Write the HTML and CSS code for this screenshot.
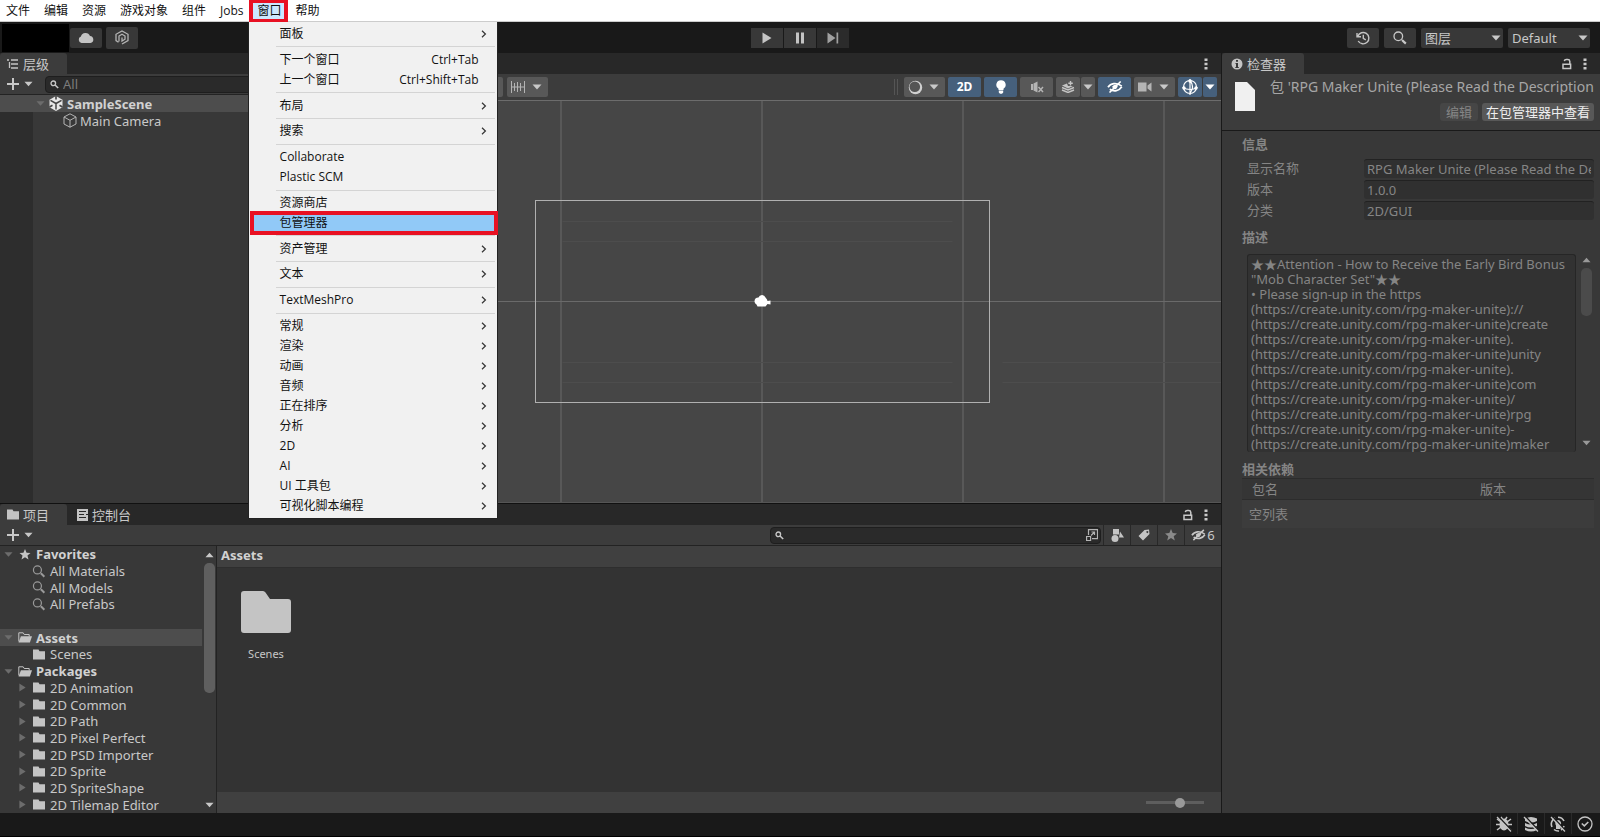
FILE: index.html
```html
<!DOCTYPE html>
<html lang="zh-CN">
<head>
  <meta charset="UTF-8">
  <title>SampleScene - Unity</title>
  <link rel="stylesheet" href="styles.css">
</head>
<body>
  <!-- Icônes partagées -->
  <svg class="sprite" width="0" height="0">
    <symbol id="down" viewBox="0 0 10 6"><path fill="currentColor" d="M0.5 0.5h9L5 5.5z"/></symbol>
    <symbol id="up" viewBox="0 0 10 6"><path fill="currentColor" d="M0.5 5.5h9L5 0.5z"/></symbol>
    <symbol id="right" viewBox="0 0 8 10"><path fill="currentColor" d="M0.5 0.5v9L7.5 5z"/></symbol>
    <symbol id="chevron" viewBox="0 0 6 8"><path fill="none" stroke="#333" stroke-width="1.2" d="M1 0.8L4.4 4 1 7.2"/></symbol>
    <symbol id="plus" viewBox="0 0 14 14"><path stroke="currentColor" stroke-width="2" d="M7 1v12M1 7h12"/></symbol>
    <symbol id="kebab" viewBox="0 0 4 12"><path fill="currentColor" d="M0.5 0.5h3v2.6h-3zM0.5 4.7h3v2.6h-3zM0.5 8.9h3v2.6h-3z"/></symbol>
    <symbol id="lock" viewBox="0 0 12 12"><path fill="none" stroke="currentColor" stroke-width="1.5" d="M2 6.3h7.6v4.2H2zM8.800 6V3.400a2 2 0 0 0-2-1.800H5.300a2 2 0 0 0-2 1.600"/></symbol>
    <symbol id="folder" viewBox="0 0 50 42"><path fill="#c4c4c4" d="M3 0h19q1.500 0 2.500 1.500L29 8h18q3 0 3 3v28q0 3-3 3H3q-3 0-3-3V3q0-3 3-3z"/></symbol>
    <symbol id="smallfolder" viewBox="0 0 12 11"><path fill="#c4c4c4" d="M0 .5h5.500l1 1.800H12V10.500H0z"/></symbol>
    <symbol id="openfolder" viewBox="0 0 14 11"><path fill="none" stroke="#c4c4c4" d="M.8 9.500V.8h4.400l1 1.700h5v2"/><path fill="#c4c4c4" d="M2.900 4.300H14L11.900 10.500H.6z"/></symbol>
    <symbol id="lens" viewBox="0 0 14 14"><circle cx="5.300" cy="5.300" r="4.300" fill="none" stroke="currentColor" stroke-width="1.300"/><path stroke="currentColor" stroke-width="2.200" d="M9 9l3.800 3.600"/></symbol>
    <symbol id="smalllens" viewBox="0 0 9 9"><circle cx="3.300" cy="3.300" r="2.300" fill="none" stroke="currentColor" stroke-width="1.300"/><path stroke="currentColor" stroke-width="1.600" d="M5 5l3.200 3"/></symbol>
    <symbol id="star" viewBox="0 0 12 12"><path fill="currentColor" d="M6 0l1.700 4.100 4.300.3-3.300 2.800 1.100 4.300L6 9.100l-3.800 2.400 1.100-4.300L0 4.400l4.300-.3z"/></symbol>
    <symbol id="eyeoff" viewBox="0 0 16 12"><path fill="none" stroke="currentColor" stroke-width="1.700" d="M1 6.300C3.500 2.300 9.500 1 14.800 5.200M14.800 5.700C12 10 7 11 2.800 8.200"/><path fill="currentColor" d="M5.200 5.500Q8 2 10.800 5.500 9 9.400 6 8z"/><path stroke="currentColor" stroke-width="1.600" d="M2.500 11.500L13.700.5"/></symbol>
  </svg>

  <div class="app">
    <nav class="menubar">
      <button>文件</button>
      <button>编辑</button>
      <button>资源</button>
      <button>游戏对象</button>
      <button>组件</button>
      <button>Jobs</button>
      <div class="menu-holder">
        <button class="open marked">窗口</button>
        <div class="menu">
          <button class="menu-item"><span>面板</span><svg><use href="#chevron"/></svg></button>
          <hr>
          <button class="menu-item"><span>下一个窗口</span><kbd>Ctrl+Tab</kbd></button>
          <button class="menu-item"><span>上一个窗口</span><kbd>Ctrl+Shift+Tab</kbd></button>
          <hr>
          <button class="menu-item"><span>布局</span><svg><use href="#chevron"/></svg></button>
          <hr>
          <button class="menu-item"><span>搜索</span><svg><use href="#chevron"/></svg></button>
          <hr>
          <button class="menu-item"><span>Collaborate</span></button>
          <button class="menu-item"><span>Plastic SCM</span></button>
          <hr>
          <button class="menu-item"><span>资源商店</span></button>
          <button class="menu-item selected marked"><span>包管理器</span></button>
          <hr>
          <button class="menu-item"><span>资产管理</span><svg><use href="#chevron"/></svg></button>
          <hr>
          <button class="menu-item"><span>文本</span><svg><use href="#chevron"/></svg></button>
          <hr>
          <button class="menu-item"><span>TextMeshPro</span><svg><use href="#chevron"/></svg></button>
          <hr>
          <button class="menu-item"><span>常规</span><svg><use href="#chevron"/></svg></button>
          <button class="menu-item"><span>渲染</span><svg><use href="#chevron"/></svg></button>
          <button class="menu-item"><span>动画</span><svg><use href="#chevron"/></svg></button>
          <button class="menu-item"><span>音频</span><svg><use href="#chevron"/></svg></button>
          <button class="menu-item"><span>正在排序</span><svg><use href="#chevron"/></svg></button>
          <button class="menu-item"><span>分析</span><svg><use href="#chevron"/></svg></button>
          <button class="menu-item"><span>2D</span><svg><use href="#chevron"/></svg></button>
          <button class="menu-item"><span>AI</span><svg><use href="#chevron"/></svg></button>
          <button class="menu-item"><span>UI 工具包</span><svg><use href="#chevron"/></svg></button>
          <button class="menu-item"><span>可视化脚本编程</span><svg><use href="#chevron"/></svg></button>
        </div>
      </div>
      <button>帮助</button>
    </nav>

    <header class="topbar">
      <div class="account">
        <div class="account-name"></div>
        <button class="tool" aria-label="Cloud"><svg width="16" height="11" viewBox="0 0 16 11"><path fill="#c4c4c4" d="M3.500 11a3.400 3.400 0 0 1-.6-6.500A4.800 4.800 0 0 1 12 3.900 3.600 3.600 0 0 1 12.500 11z"/></svg></button>
        <button class="tool plastic" aria-label="Plastic SCM"><svg width="14" height="15" viewBox="0 0 14 15"><path fill="none" stroke="#b4b4b4" stroke-width="1.300" d="M3.500 12.300L1 10.600V4.300L7 1l6 3.300v6.300l-6 3.400M4 11.500V6L7 4.200 10 6v3.200L7 11V7.500"/></svg></button>
      </div>
      <div class="playbar">
        <button class="tool" aria-label="Play"><svg width="10" height="12" viewBox="0 0 10 12"><path fill="#c4c4c4" d="M.5.5v11L9.500 6z"/></svg></button>
        <button class="tool" aria-label="Pause"><svg width="10" height="12" viewBox="0 0 10 12"><path fill="#c4c4c4" d="M1 .5h3v11H1zM6 .5h3v11H6z"/></svg></button>
        <button class="tool dim" aria-label="Step"><svg width="12" height="12" viewBox="0 0 12 12"><path fill="#a0a0a0" d="M.5.5v11L8.500 6zM9.500.5h1.700v11H9.500z"/></svg></button>
      </div>
      <div class="top-right">
        <button class="tool" aria-label="History"><svg width="14" height="14" viewBox="0 0 14 14"><path fill="none" stroke="#c4c4c4" stroke-width="1.400" d="M1.800 5.200A5.700 5.700 0 1 1 2.200 10M1 2v3.700h4M7.300 3.800v3.600l2.500 1.400"/></svg></button>
        <button class="tool" aria-label="Search"><svg width="14" height="14"><use href="#lens"/></svg></button>
        <label class="drop"><select aria-label="Layers"><option>图层</option></select><svg width="10" height="6"><use href="#down"/></svg></label>
        <label class="drop"><select aria-label="Layout"><option>Default</option></select><svg width="10" height="6"><use href="#down"/></svg></label>
      </div>
    </header>

    <div class="workspace">
      <div class="left-area">
        <div class="upper">
          <section class="panel hierarchy">
            <div class="tabs">
              <div class="tab active"><svg width="12" height="10" viewBox="0 0 12 10"><path stroke="#c4c4c4" stroke-width="1.300" d="M0 1h2M4 1h7M4 5h7M4 9h7M2.500 3v6"/></svg>层级</div>
            </div>
            <div class="panel-tools">
              <button class="add" aria-label="Add"><svg width="14" height="14"><use href="#plus"/></svg><svg width="9" height="6"><use href="#down"/></svg></button>
              <label class="search"><svg width="9" height="9"><use href="#smalllens"/></svg><input type="text" placeholder="All" aria-label="Search hierarchy"></label>
            </div>
            <div class="objects">
              <div class="object scene-row">
                <svg width="9" height="7" class="fold"><use href="#down"/></svg>
                <svg width="14" height="15" viewBox="0 0 14 15"><path fill="#e6e6e6" d="M7 0l6.500 3.700v7.500L7 15 .5 11.200V3.700z"/><path stroke="#444" stroke-width="1.500" d="M7 7.500v6M7 7.500L1.500 4.300M7 7.500l5.500-3.200"/><path stroke="#444" stroke-width="1.600" d="M7 0v3.500M.5 11l3-1.700M13.500 11l-3-1.700"/></svg>
                <b>SampleScene</b>
              </div>
              <div class="object child">
                <svg width="14" height="15" viewBox="0 0 14 15"><path fill="none" stroke="#b4b4b4" d="M7 .8l6 3.200v7L7 14.200 1 11V4zM1 4l6 3.300L13 4M7 7.300v7"/></svg>
                <span>Main Camera</span>
              </div>
            </div>
          </section>

          <section class="panel scene">
            <div class="tabs">
              <div class="tab-actions"><svg width="4" height="12"><use href="#kebab"/></svg></div>
            </div>
            <div class="scene-tools">
              <div class="group">
                <button class="wide" aria-label="Pivot"></button>
                <button class="wide" aria-label="Rotation"></button>
                <button class="wide" aria-label="Grid"></button>
                <button class="pair" aria-label="Snap"><svg width="14" height="12" viewBox="0 0 14 12"><path stroke="#b4b4b4" d="M.5 0v12M3.500 2v8M6.500 1v10M9.500 2v8M13.500 0v12M0 6h14"/></svg><svg width="10" height="6"><use href="#down"/></svg></button>
              </div>
              <div class="group">
                <i class="grip"></i>
                <button class="pair" aria-label="Shading"><svg width="15" height="15" viewBox="0 0 15 15"><circle cx="7.500" cy="7.500" r="6.700" fill="#d0d0d0"/><circle cx="6.800" cy="6.800" r="5.300" fill="#555"/></svg><svg width="10" height="6"><use href="#down"/></svg></button>
                <button class="on two-d">2D</button>
                <button class="on" aria-label="Lighting"><svg width="10" height="14" viewBox="0 0 10 14"><path fill="#fff" d="M5 .3a4.600 4.600 0 0 1 2.500 8.500V10h-5V8.800A4.600 4.600 0 0 1 5 .3zM2.800 10.600h4.400v1.800L6 13.700H4l-1.200-1.300z"/></svg></button>
                <button aria-label="Audio"><svg width="14" height="12" viewBox="0 0 14 12"><path fill="#b4b4b4" d="M1 3h2v6H1zM3.500 2.500L7.500.5v11l-4-2z"/><path stroke="#b4b4b4" stroke-width="1.500" d="M8.500 6l4.500 5M13 6l-4.500 5"/></svg></button>
                <span class="split">
                  <button aria-label="Effects"><svg width="14" height="12" viewBox="0 0 14 12"><path fill="#c4c4c4" d="M1 4.500l5-2 1 2.500 5 0-5 2.500z"/><path fill="none" stroke="#c4c4c4" stroke-width="1.400" d="M1 6.500l6 2.500 6-2.500M1 9l6 2.500L13 9M9.500 0v4.500M7.300 2.200h4.500"/></svg></button>
                  <button class="arrow" aria-label="Effects options"><svg width="10" height="6"><use href="#down"/></svg></button>
                </span>
                <button class="on" aria-label="Visibility"><svg width="16" height="12"><use href="#eyeoff"/></svg></button>
                <button class="pair" aria-label="Camera"><svg width="14" height="10" viewBox="0 0 14 10"><path fill="#b4b4b4" d="M0 .5h8.500v9H0zM9.500 3.500L13.500.5v9l-4-3z"/></svg><svg width="10" height="6"><use href="#down"/></svg></button>
                <span class="split">
                  <button class="on" aria-label="Gizmos"><svg width="16" height="16" viewBox="0 0 16 16"><g fill="none" stroke="#fff" stroke-width="1.200"><circle cx="8" cy="8" r="6.500"/><path d="M8 0v16M.5 8.500q7.500 4 15 0M8 1.500q5 6 0 13"/></g><circle cx="8" cy="2" r="1.700" fill="#fff"/><circle cx="2" cy="9" r="1.700" fill="#fff"/><circle cx="14" cy="9" r="1.700" fill="#fff"/></svg></button>
                  <button class="arrow on" aria-label="Gizmo options"><svg width="10" height="6"><use href="#down"/></svg></button>
                </span>
              </div>
            </div>
            <svg class="scene-view">
              <svg x="50%" y="50%" overflow="visible">
                <path stroke="#6a6a6a" fill="none" d="M-201.500-400v800M-.5-400v800M200.500-400v800M401.500-400v800M-900 0h1800"/>
                <path stroke="#4d4d4d" fill="none" d="M-200-80h390M-200-60h390M-200 61h390M-200 81h390M240 61h220M240 81h220"/>
                <rect x="-227" y="-101" width="454" height="202" fill="none" stroke="#b0b0b0"/>
                <path fill="#fff" d="M-4-4a3.700 3.700 0 0 1 7 0q2 2 2 3.500l3-.5v4l-3-.5L3 5h-8L-6 3a3.500 3.500 0 0 1-2-3q0-4 4-4z"/>
              </svg>
            </svg>
          </section>
        </div>

        <section class="panel project">
          <div class="tabs">
            <div class="tab active"><svg width="12" height="11"><use href="#smallfolder"/></svg>项目</div>
            <div class="tab"><svg width="11" height="12" viewBox="0 0 11 12"><path fill="#c4c4c4" d="M0 0h11v12H0z"/><path stroke="#282828" d="M2 2.500h7M2 5.500h5M2 8.500h7M9 5.500h2"/></svg>控制台</div>
            <div class="tab-actions"><svg width="12" height="12"><use href="#lock"/></svg><svg width="4" height="12"><use href="#kebab"/></svg></div>
          </div>
          <div class="panel-tools">
            <button class="add" aria-label="Create"><svg width="14" height="14"><use href="#plus"/></svg><svg width="9" height="6"><use href="#down"/></svg></button>
            <div class="project-search">
              <label class="search"><svg width="9" height="9"><use href="#smalllens"/></svg><input type="text" aria-label="Search assets"><svg class="picker" width="12" height="12" viewBox="0 0 12 12"><path fill="none" stroke="#b4b4b4" stroke-width="1.200" d="M2.500 6V.6h9v9H6M.6 7.500h4v4h-4zM5 6.500L8.500 3M5.500 3h3v3"/></svg></label>
              <button class="filter" aria-label="Type"><svg width="13" height="13" viewBox="0 0 13 13"><path fill="#c4c4c4" d="M2 0h6v5.500H2zM9 2.500l4 6H8z"/><circle cx="4" cy="9.500" r="3.500" fill="#c4c4c4"/></svg></button>
              <button class="filter" aria-label="Label"><svg width="12" height="12" viewBox="0 0 12 12"><path fill="#c4c4c4" fill-rule="evenodd" d="M6.500 1L11 .5 11.500 5 5 11.500.5 7zM9.300 2a1 1 0 1 0 .1 0z"/></svg></button>
              <button class="filter dimmed" aria-label="Favorite"><svg width="12" height="12"><use href="#star"/></svg></button>
              <button class="filter hidden-count"><svg width="15" height="12"><use href="#eyeoff"/></svg>6</button>
            </div>
          </div>
          <div class="browser">
            <div class="tree">
              <div class="node"><svg class="fold"><use href="#down"/></svg><svg class="icon"><use href="#star"/></svg><b>Favorites</b></div>
              <div class="node leaf"><svg class="icon thin"><use href="#lens"/></svg>All Materials</div>
              <div class="node leaf"><svg class="icon thin"><use href="#lens"/></svg>All Models</div>
              <div class="node leaf"><svg class="icon thin"><use href="#lens"/></svg>All Prefabs</div>
              <div class="node"></div>
              <div class="node current"><svg class="fold"><use href="#down"/></svg><svg class="icon"><use href="#openfolder"/></svg><b>Assets</b></div>
              <div class="node leaf"><svg class="icon"><use href="#smallfolder"/></svg>Scenes</div>
              <div class="node"><svg class="fold"><use href="#down"/></svg><svg class="icon"><use href="#openfolder"/></svg><b>Packages</b></div>
              <div class="node sub"><svg class="fold"><use href="#right"/></svg><svg class="icon"><use href="#smallfolder"/></svg>2D Animation</div>
              <div class="node sub"><svg class="fold"><use href="#right"/></svg><svg class="icon"><use href="#smallfolder"/></svg>2D Common</div>
              <div class="node sub"><svg class="fold"><use href="#right"/></svg><svg class="icon"><use href="#smallfolder"/></svg>2D Path</div>
              <div class="node sub"><svg class="fold"><use href="#right"/></svg><svg class="icon"><use href="#smallfolder"/></svg>2D Pixel Perfect</div>
              <div class="node sub"><svg class="fold"><use href="#right"/></svg><svg class="icon"><use href="#smallfolder"/></svg>2D PSD Importer</div>
              <div class="node sub"><svg class="fold"><use href="#right"/></svg><svg class="icon"><use href="#smallfolder"/></svg>2D Sprite</div>
              <div class="node sub"><svg class="fold"><use href="#right"/></svg><svg class="icon"><use href="#smallfolder"/></svg>2D SpriteShape</div>
              <div class="node sub"><svg class="fold"><use href="#right"/></svg><svg class="icon"><use href="#smallfolder"/></svg>2D Tilemap Editor</div>
            </div>
            <div class="scrollbar"><svg width="9" height="6"><use href="#up"/></svg><div class="track"><div class="thumb"></div></div><svg width="9" height="6"><use href="#down"/></svg></div>
            <div class="assets">
              <div class="crumb"><b>Assets</b></div>
              <div class="files">
                <figure class="file"><svg width="50" height="42"><use href="#folder"/></svg><figcaption>Scenes</figcaption></figure>
              </div>
              <div class="zoombar"><input type="range" min="0" max="100" value="60" aria-label="Icon size"></div>
            </div>
          </div>
        </section>
      </div>

      <aside class="panel inspector">
        <div class="tabs">
          <div class="tab active"><svg width="12" height="12" viewBox="0 0 12 12"><circle cx="6" cy="6" r="5.500" fill="#c4c4c4"/><path fill="#383838" d="M5 2h2v1.800H5zM4.500 5H7v4h.8v1H4.300V9H5V6h-.5z"/></svg>检查器</div>
          <div class="tab-actions"><svg width="12" height="12"><use href="#lock"/></svg><svg width="4" height="12"><use href="#kebab"/></svg></div>
        </div>
        <div class="inspector-head">
          <svg class="doc" width="20" height="29" viewBox="0 0 20 29"><path fill="#f0f0f0" d="M0 0h12l8 8v21H0z"/></svg>
          <div class="head-body">
            <div class="head-title">包 'RPG Maker Unite (Please Read the Description</div>
            <div class="head-buttons">
              <button disabled>编辑</button>
              <button>在包管理器中查看</button>
            </div>
          </div>
        </div>
        <div class="inspector-body">
          <h2>信息</h2>
          <div class="fields">
            <label for="name">显示名称</label><input id="name" type="text" value="RPG Maker Unite (Please Read the Description)" readonly>
            <label for="version">版本</label><input id="version" type="text" value="1.0.0" readonly>
            <label for="category">分类</label><input id="category" type="text" value="2D/GUI" readonly>
          </div>
          <h2 id="desc-title">描述</h2>
          <div class="description">
            <textarea readonly aria-labelledby="desc-title">★★Attention - How to Receive the Early Bird Bonus
"Mob Character Set"★★
• Please sign-up in the https
(https://create.unity.com/rpg-maker-unite)://
(https://create.unity.com/rpg-maker-unite)create
(https://create.unity.com/rpg-maker-unite).
(https://create.unity.com/rpg-maker-unite)unity
(https://create.unity.com/rpg-maker-unite).
(https://create.unity.com/rpg-maker-unite)com
(https://create.unity.com/rpg-maker-unite)/
(https://create.unity.com/rpg-maker-unite)rpg
(https://create.unity.com/rpg-maker-unite)-
(https://create.unity.com/rpg-maker-unite)maker</textarea>
            <div class="scrollbar"><svg width="9" height="6"><use href="#up"/></svg><div class="track"><div class="thumb"></div></div><svg width="9" height="6"><use href="#down"/></svg></div>
          </div>
          <h2>相关依赖</h2>
          <table class="deps">
            <thead><tr><th>包名</th><th>版本</th></tr></thead>
            <tbody><tr><td colspan="2">空列表</td></tr></tbody>
          </table>
        </div>
      </aside>
    </div>

    <footer class="statusbar">
      <button aria-label="Debugger"><svg width="16" height="16" viewBox="0 0 16 16"><ellipse cx="8" cy="8.500" rx="4.500" ry="6" fill="#c4c4c4"/><path stroke="#c4c4c4" stroke-width="1.500" d="M1 3l4 3M15 3l-4 3M0 8.500h16M1 14l4-3M15 14l-4-3M5 1l2 3M11 1L9 4"/><path stroke="#191919" stroke-width="1.500" d="M2 0l14 15"/><path stroke="#c4c4c4" stroke-width="1.300" d="M1 1l14 14.500"/></svg></button>
      <button aria-label="Cache"><svg width="16" height="16" viewBox="0 0 16 16"><path fill="#c4c4c4" d="M2 2.500q6-3 12 0V5q-6 3-12 0zM2 7q6 3 12 0v3q-6 3-12 0zM2 11.500q6 3 12 0V14q-6 3-12 0z"/><path stroke="#191919" stroke-width="1.500" d="M2 0l14 15"/><path stroke="#c4c4c4" stroke-width="1.300" d="M1 1l14 14.500"/></svg></button>
      <button aria-label="Lighting"><svg width="16" height="16" viewBox="0 0 16 16"><path fill="none" stroke="#c4c4c4" stroke-width="1.600" d="M2 11A6.800 6.800 0 0 1 5 2M8 1.200A6.800 6.800 0 0 1 14 5M14 10a6.800 6.800 0 0 1-3 4M9 15a6.800 6.800 0 0 1-5-1.500"/><path fill="#c4c4c4" d="M8 4a3.500 3.500 0 0 1 2.500 5.500V13H6V9.500A3.500 3.500 0 0 1 8 4z"/><path stroke="#191919" stroke-width="1.500" d="M2 0l14 15"/><path stroke="#c4c4c4" stroke-width="1.300" d="M1 1l14 14.500"/></svg></button>
      <button aria-label="Progress"><svg width="16" height="16" viewBox="0 0 16 16"><circle cx="8" cy="8" r="7" fill="none" stroke="#c4c4c4" stroke-width="1.300"/><path fill="none" stroke="#c4c4c4" stroke-width="1.600" d="M4.800 7.500l2.500 2.300 4-3.800"/></svg></button>
    </footer>
  </div>
</body>
</html>
```
FILE: styles.css
```css
* {
  box-sizing: border-box;
}

body {
  margin: 0;
  background: #191919;
  color: #c8c8c8;
  font-family: "Noto Sans", "Noto Sans CJK SC", sans-serif;
  font-size: 13px;
  line-height: 16px;
}

button, input, select, textarea {
  margin: 0;
  padding: 0;
  border: none;
  background: none;
  color: inherit;
  font: inherit;
  outline: none;
}

svg {
  display: block;
  flex: none;
}

.sprite {
  position: absolute;
}

.app {
  display: flex;
  flex-direction: column;
  height: 100vh;
  overflow: hidden;
}

/* Barre de menus */
.menubar {
  display: flex;
  flex: none;
  gap: 2px;
  height: 22px;
  background: #fff;
  border-bottom: 1px solid #ccc;
  color: #111;
  font-family: "Open Sans", "Noto Sans CJK SC", sans-serif;
  font-size: 12px;
}

.menubar > button, .menu-holder > button {
  padding: 0 6px;
  height: 21px;
}

.menu-holder {
  position: relative;
  z-index: 10;
}

.menu-holder > .open {
  background: #cce8ff;
}

.marked {
  position: relative;
}

.marked::after {
  content: "";
  position: absolute;
  inset: -1px 0 -2px -3px;
  border: 4px solid #e81123;
}

.menu {
  position: absolute;
  top: 22px;
  left: -4px;
  width: 250px;
  height: 497px;
  display: flex;
  flex-direction: column;
  padding: 2px 2px 2px 1px;
  background: #f1f1f1;
  border: 1px solid #222;
  border-top: none;
}

.menu hr {
  flex: 1;
  margin: 0 0 0 26px;
  border: none;
  background: linear-gradient(#d4d4d4, #d4d4d4) center / 100% 1px no-repeat;
}

.menu-item {
  display: flex;
  align-items: center;
  justify-content: space-between;
  height: 20px;
  padding: 0 8px 0 30px;
  text-align: left;
}

.menu-item svg {
  width: 6px;
  height: 8px;
}

.menu-item kbd {
  padding-right: 8px;
  font: inherit;
}

.menu-item.selected {
  background: #91c9f7;
}

.menu-item.marked::after {
  inset: -2px -3px -2px 0;
}

/* Barre principale */
.topbar {
  display: grid;
  grid-template-columns: 1fr auto 1fr;
  align-items: center;
  flex: none;
  height: 31px;
  padding: 0 2px;
}

.account, .playbar, .top-right {
  display: flex;
  align-items: center;
}

.account-name {
  width: 67px;
  height: 28px;
  margin-right: 1px;
  background: #000;
}

.tool {
  display: flex;
  align-items: center;
  justify-content: center;
  width: 32px;
  height: 20px;
  background: #383838;
  border-radius: 2px;
}

.tool.plastic {
  margin-left: 4px;
  height: 22px;
}

.playbar {
  gap: 1px;
}

.playbar .tool {
  border-radius: 0;
}

.playbar .dim {
  background: #2b2b2b;
}

.top-right {
  justify-content: flex-end;
  gap: 5px;
  padding-right: 8px;
}

.drop {
  position: relative;
  display: block;
}

.drop select {
  appearance: none;
  display: block;
  width: 82px;
  height: 20px;
  padding-left: 4px;
  background: #383838;
  border-radius: 2px;
}

.drop svg {
  position: absolute;
  top: 7px;
  right: 2px;
  pointer-events: none;
}

/* Zones */
.workspace {
  display: flex;
  flex: 1;
  min-height: 0;
}

.left-area {
  display: flex;
  flex-direction: column;
  flex: 1;
  min-width: 0;
}

.upper {
  display: flex;
  flex: 1;
  gap: 1px;
  min-height: 0;
}

.panel {
  display: flex;
  flex-direction: column;
  background: #383838;
}

.tabs {
  display: flex;
  flex: none;
  height: 21px;
  background: #282828;
}

.tab {
  display: flex;
  align-items: center;
  gap: 4px;
  padding: 0 11px 0 10px;
}

.tab.active {
  padding: 0 18px 0 7px;
  background: #3c3c3c;
  border-radius: 3px 3px 0 0;
}

.tab-actions {
  display: flex;
  align-items: center;
  gap: 10px;
  margin-left: auto;
  padding-right: 13px;
}

.panel-tools {
  display: flex;
  align-items: center;
  justify-content: space-between;
  flex: none;
  height: 21px;
  background: #3c3c3c;
  border-bottom: 1px solid #232323;
}

.add {
  display: flex;
  align-items: center;
  gap: 4px;
  padding-left: 6px;
}

.search {
  display: flex;
  align-items: center;
  gap: 4px;
  height: 17px;
  padding-left: 4px;
  background: #2a2a2a;
  border: 1px solid #1e1e1e;
  border-radius: 4px;
}

.search input {
  flex: 1;
  min-width: 0;
}

.search input::placeholder {
  color: #7c7c7c;
  opacity: 1;
}

/* Hiérarchie */
.hierarchy {
  width: 303px;
}

.hierarchy .search {
  width: 252px;
  margin-right: 6px;
}

.objects {
  flex: 1;
  background: linear-gradient(to right, #2d2d2d 33px, #383838 33px);
}

.object {
  display: flex;
  align-items: center;
  gap: 3px;
  height: 17px;
}

.scene-row {
  gap: 4px;
  padding-left: 36px;
  background: #4d4d4d;
}

.object.child {
  padding-left: 63px;
}

.fold {
  color: #6c6c6c;
}

/* Scène */
.scene {
  flex: 1;
  min-width: 0;
}

.scene-tools {
  display: flex;
  align-items: center;
  justify-content: space-between;
  flex: none;
  height: 26px;
  padding: 0 4px 0 5px;
  background: #3c3c3c;
}

.group {
  display: flex;
  align-items: center;
  gap: 3px;
}

.group:first-child {
  gap: 4px;
}

.group button {
  display: flex;
  align-items: center;
  justify-content: center;
  width: 33px;
  height: 20px;
  background: #585858;
  border-radius: 2px;
}

.group .wide {
  width: 62px;
}

.group .pair {
  justify-content: space-between;
  width: 41px;
  padding: 0 6px 0 4px;
}

.group .on {
  background: #46607c;
  color: #fff;
}

.group .two-d {
  font-size: 12px;
  font-weight: 700;
}

.split {
  display: flex;
  gap: 1px;
}

.group .split button {
  width: 24px;
}

.group .split .arrow {
  width: 14px;
}

.grip {
  width: 4px;
  height: 16px;
  margin-right: 3px;
  border: 1px solid #555;
  border-width: 0 1px;
}

.scene-view {
  width: 100%;
  flex: 1;
  min-height: 0;
  background: #464646;
  border-top: 1px solid #6c6c6c;
  border-bottom: 1px solid #555;
}

/* Projet */
.project {
  flex: none;
  height: 310px;
  border-top: 1px solid #111;
}

.project-search {
  display: flex;
  align-items: center;
}

.project .search {
  width: 331px;
  margin-right: 2px;
}

.picker {
  margin-right: 2px;
}

.filter {
  display: flex;
  align-items: center;
  justify-content: center;
  width: 27px;
  height: 20px;
  border-left: 1px solid #282828;
}

.filter.dimmed {
  color: #8a8a8a;
}

.filter.hidden-count {
  width: 37px;
  gap: 1px;
}

.browser {
  display: flex;
  flex: 1;
  min-height: 0;
}

.tree {
  display: grid;
  grid-auto-rows: 1fr;
  width: 202px;
}

.node {
  display: flex;
  align-items: center;
  gap: 4px;
  padding-left: 4px;
}

.node .fold {
  width: 9px;
  height: 7px;
  margin-right: 1px;
}

.node .icon {
  width: 14px;
  height: 11px;
  color: #c4c4c4;
}

.node .thin {
  height: 13px;
  color: #9a9a9a;
}

.node.leaf {
  padding-left: 32px;
}

.node.sub {
  padding-left: 18px;
}

.node.sub .fold {
  height: 9px;
}

.node.current {
  background: #4d4d4d;
}

.node b, .crumb b, .object b {
  color: #d2d2d2;
}

.scrollbar {
  display: flex;
  flex-direction: column;
  align-items: center;
  justify-content: space-between;
  width: 14px;
  padding: 6px 0 5px;
}

.track {
  flex: 1;
  width: 11px;
  margin: 5px 0 4px;
}

.thumb {
  width: 11px;
  height: 130px;
  background: #5f5f5f;
  border-radius: 5px;
}

.assets {
  display: flex;
  flex-direction: column;
  flex: 1;
  background: #333;
  border-left: 1px solid #232323;
}

.crumb {
  height: 22px;
  padding: 1px 4px;
  background: #404040;
  border-bottom: 1px solid #2e2e2e;
}

.files {
  flex: 1;
  padding: 23px 24px;
}

.file {
  display: flex;
  flex-direction: column;
  align-items: center;
  gap: 13px;
  width: 50px;
  margin: 0;
  font-size: 11px;
}

.zoombar {
  display: flex;
  align-items: center;
  justify-content: flex-end;
  height: 21px;
  padding-right: 17px;
  background: #404040;
}

.zoombar input {
  appearance: none;
  width: 58px;
  height: 3px;
  background: #5e5e5e;
}

.zoombar input::-webkit-slider-thumb {
  appearance: none;
  width: 10px;
  height: 10px;
  background: #999;
  border-radius: 50%;
}

/* Inspecteur */
.inspector {
  flex: none;
  width: 379px;
  border-left: 1px solid #191919;
}

.inspector .tab.active {
  padding-left: 9px;
}

.inspector-head {
  display: flex;
  height: 57px;
  padding: 5px 6px 0 13px;
  background: #3c3c3c;
  border-bottom: 1px solid #191919;
}

.doc {
  margin-top: 3px;
}

.head-body {
  display: flex;
  flex-direction: column;
  flex: 1;
  gap: 8px;
  min-width: 0;
  padding-left: 15px;
}

.head-title {
  overflow: hidden;
  color: #a6a6a6;
  font-size: 14px;
  white-space: nowrap;
}

.head-buttons {
  display: flex;
  justify-content: flex-end;
  gap: 4px;
}

.head-buttons button {
  height: 18px;
  padding: 0 4px;
  background: #585858;
  border-radius: 3px;
  color: #eee;
}

.head-buttons button:disabled {
  padding: 0 6px;
  background: #464646;
  color: #858585;
}

.inspector-body {
  display: flex;
  flex-direction: column;
  padding: 4px 6px 0 20px;
  color: #858585;
}

.inspector-body h2 {
  margin: 0;
  font-size: 13px;
  font-weight: 700;
  line-height: 18px;
}

.fields {
  display: grid;
  grid-template-columns: 117px 1fr;
  row-gap: 2px;
  margin: 6px 0 8px;
  padding-left: 5px;
}

.fields label, .fields input {
  height: 19px;
  line-height: 19px;
}

.fields input {
  min-width: 0;
  padding: 0 3px;
  background: #303030;
  border-top: 1px solid #222;
  border-radius: 3px;
}

.description {
  display: flex;
  height: 198px;
  margin: 8px 0;
  padding-left: 5px;
}

.description textarea {
  flex: 1;
  padding: 2px 3px 0;
  overflow: hidden;
  resize: none;
  background: #323232;
  border: 1px solid #262626;
  border-bottom: none;
  border-radius: 3px;
  line-height: 15px;
  white-space: pre;
}

.description .scrollbar {
  width: 12px;
  margin: 0 2px 0 4px;
  padding: 3px 0 6px;
  color: #999;
}

.description .thumb {
  height: 48px;
  background: #4b4b4b;
}

.deps {
  width: 100%;
  border-collapse: collapse;
  background: #3c3c3c;
}

.deps th {
  height: 21px;
  padding: 0 10px;
  background: #353535;
  border-top: 1px solid #2c2c2c;
  border-bottom: 1px solid #2c2c2c;
  font-weight: 400;
  text-align: left;
}

.deps th:last-child {
  width: 124px;
}

.deps td {
  height: 28px;
  padding: 0 7px;
}

/* Barre d'état */
.statusbar {
  display: flex;
  justify-content: flex-end;
  flex: none;
  height: 24px;
  padding: 0 2px 2px 0;
  border-bottom: 1px solid #000;
}

.statusbar button {
  display: flex;
  align-items: center;
  justify-content: center;
  width: 27px;
  border-left: 1px solid #2a2a2a;
}
```
